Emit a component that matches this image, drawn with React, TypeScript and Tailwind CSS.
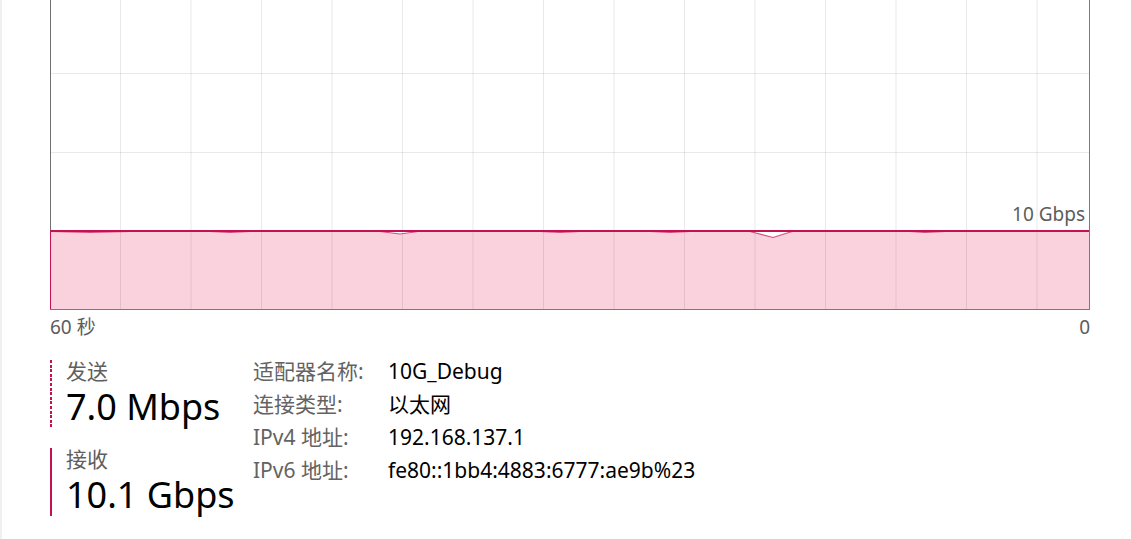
import React from "react";

const FONT = '"Noto Sans", "Noto Sans CJK SC", sans-serif';

const vLines = [70.5, 141, 211.5, 282, 352.5, 423, 493.5, 564, 634.5, 705, 775.5, 846, 916.5, 987];

// data line points (local coords, x relative to graph left edge)
const pts: [number, number][] = [
  [1, 231.5],
  [40, 232.5],
  [80, 231.5],
  [160, 231.5],
  [180, 232.5],
  [200, 231.5],
  [330, 231.5],
  [350, 234],
  [368, 231.5],
  [490, 231.5],
  [510, 232.5],
  [530, 231.5],
  [600, 231.5],
  [620, 232.5],
  [640, 231.5],
  [700, 231.5],
  [723, 237.5],
  [742, 231.5],
  [860, 231.5],
  [875, 232.5],
  [895, 231.5],
  [1039, 231.5],
];

function Graph() {
  const poly = pts.map(([x, y]) => `${x},${y}`).join(" ");
  const fillPts = `1,309 ${poly} 1039,309`;
  return (
    <div className="relative w-[1040px] h-[310px]">
      <svg width={1040} height={310} className="block">
        <rect x={0} y={0} width={1040} height={310} fill="#ffffff" />
        <polygon points={fillPts} fill="#f9d2de" />
        {vLines.map((x) => (
          <line key={x} x1={x} y1={0} x2={x} y2={309} stroke="rgba(0,0,0,0.085)" strokeWidth={1} />
        ))}
        <line x1={1} y1={73.5} x2={1039} y2={73.5} stroke="rgba(0,0,0,0.085)" strokeWidth={1} />
        <line x1={1} y1={152.5} x2={1039} y2={152.5} stroke="rgba(0,0,0,0.085)" strokeWidth={1} />
        <polyline points={poly} fill="none" stroke="#c8185a" strokeOpacity={0.75} strokeWidth={1.2} />
        <rect x={1} y={230} width={1038} height={2} fill="#c2124f" />
        <line x1={0.5} y1={0} x2={0.5} y2={230} stroke="#707070" strokeWidth={1} />
        <line x1={0.5} y1={230} x2={0.5} y2={309} stroke="#c2124f" strokeWidth={1} />
        <line x1={1039.5} y1={0} x2={1039.5} y2={310} stroke="#7a7a7a" strokeWidth={1} />
        <line x1={0} y1={309.5} x2={1040} y2={309.5} stroke="#7a7a7a" strokeWidth={1} />
      </svg>
      <div className="absolute right-[5px] top-[202px] h-[24px] text-[19px] leading-[24px] text-[#5c5c5c] whitespace-nowrap">10 Gbps</div>
    </div>
  );
}

function Stat({ label, value, dotted }: { label: string; value: string; dotted?: boolean }) {
  return (
    <div className="relative pl-[16px] flex flex-col">
      {dotted ? (
        <div className="absolute left-0 top-0 bottom-0 w-[2px] bg-[repeating-linear-gradient(to_bottom,#c2124f_0px,#c2124f_3px,transparent_3px,transparent_4.6px)]" />
      ) : (
        <div className="absolute left-0 top-0 bottom-0 w-[2px] bg-[#c2124f]" />
      )}
      <div className="h-[26px] pb-[4px] text-[21px] leading-[22px] text-[#5f5f5f] whitespace-nowrap">{label}</div>
      <div className="h-[42px] text-[36px] leading-[42px] text-black whitespace-nowrap">{value}</div>
    </div>
  );
}

export default function App() {
  const rows: [string, string][] = [
    ["适配器名称:", "10G_Debug"],
    ["连接类型:", "以太网"],
    ["IPv4 地址:", "192.168.137.1"],
    ["IPv6 地址:", "fe80::1bb4:4883:6777:ae9b%23"],
  ];
  return (
    <div className="w-[1131px] h-[539px] bg-white flex overflow-hidden" style={{ fontFamily: FONT }}>
      <div className="w-[2px] h-full bg-[#f0f0f0]" />
      <div className="flex flex-col pl-[48px]">
        <Graph />
        <div className="flex justify-between w-[1040px] h-[24px] mt-[5px] text-[19px] leading-[24px] text-[#5c5c5c]">
          <span>60 秒</span>
          <span>0</span>
        </div>
        <div className="flex mt-[16px]">
          <div className="w-[203px] pt-[5px] flex flex-col gap-[20px]">
            <Stat label="发送" value="7.0 Mbps" dotted />
            <Stat label="接收" value="10.1 Gbps" />
          </div>
          <div className="flex flex-col text-[21px] leading-[33px]">
            {rows.map(([k, v]) => (
              <div key={k} className="flex h-[33px] whitespace-nowrap">
                <div className="w-[135px] h-[33px] text-[#636363]">{k}</div>
                <div className="h-[33px] text-black">{v}</div>
              </div>
            ))}
          </div>
        </div>
      </div>
    </div>
  );
}
